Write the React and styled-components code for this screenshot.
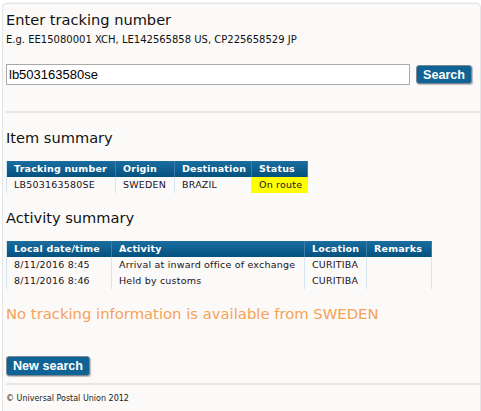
import React from "react";
import styled, { createGlobalStyle } from "styled-components";

const GlobalStyle = createGlobalStyle`
  body {
    margin: 0;
    background: #ffffff;
    font-family: "DejaVu Sans", Verdana, sans-serif;
    color: #000;
  }
`;

const items = [
  { tracking: "LB503163580SE", origin: "SWEDEN", destination: "BRAZIL", status: "On route" },
];

const events = [
  { date: "8/11/2016 8:45", activity: "Arrival at inward office of exchange", location: "CURITIBA", remarks: "" },
  { date: "8/11/2016 8:46", activity: "Held by customs", location: "CURITIBA", remarks: "" },
];

const App = () => {
  return (
    <>
      <GlobalStyle />
      <Panel>
        <Heading top={7}>Enter tracking number</Heading>
        <Hint>E.g. EE15080001 XCH, LE142565858 US, CP225658529 JP</Hint>
        <SearchRow>
          <TrackInput defaultValue="lb503163580se" />
          <Button>Search</Button>
        </SearchRow>
        <Divider top={26} />

        <Heading top={16}>Item summary</Heading>
        <Table>
          <thead>
            <tr>
              <Th w={109}>Tracking number</Th>
              <Th w={59}>Origin</Th>
              <Th w={77}>Destination</Th>
              <Th w={56}>Status</Th>
            </tr>
          </thead>
          <tbody>
            {items.map((it) => (
              <tr key={it.tracking}>
                <Td>{it.tracking}</Td>
                <Td>{it.origin}</Td>
                <Td>{it.destination}</Td>
                <Td highlight>{it.status}</Td>
              </tr>
            ))}
          </tbody>
        </Table>

        <Heading top={16}>Activity summary</Heading>
        <Table>
          <thead>
            <tr>
              <Th w={105}>Local date/time</Th>
              <Th w={193}>Activity</Th>
              <Th w={62}>Location</Th>
              <Th w={65}>Remarks</Th>
            </tr>
          </thead>
          <tbody>
            {events.map((ev) => (
              <tr key={ev.date}>
                <Td>{ev.date}</Td>
                <Td>{ev.activity}</Td>
                <Td>{ev.location}</Td>
                <Td>{ev.remarks}</Td>
              </tr>
            ))}
          </tbody>
        </Table>

        <Notice>No tracking information is available from SWEDEN</Notice>

        <NewSearch>New search</NewSearch>
        <Divider top={7} />
        <Footer>© Universal Postal Union 2012</Footer>
      </Panel>
    </>
  );
};

export default App;

const Panel = styled.div`
  margin: 3px 0 0 2px;
  width: 474px;
  min-height: 420px;
  padding: 0 0 0 3px;
  background: #fbfaf8;
  border: 1px solid #e4e4e4;
  border-bottom: none;
  border-radius: 5px 5px 0 0;
  box-shadow: 0 -1px 1px rgba(0, 0, 0, 0.04);
`;

const Heading = styled.h2`
  margin: ${(p) => p.top}px 0 0 0;
  font-size: 14.6px;
  line-height: 18px;
  font-weight: normal;
  color: #111;
`;

const Hint = styled.div`
  margin-top: 5px;
  font-size: 10px;
  line-height: 12px;
  color: #111;
`;

const SearchRow = styled.div`
  display: flex;
  align-items: center;
  gap: 6px;
  margin-top: 18px;
`;

const TrackInput = styled.input`
  box-sizing: border-box;
  width: 404px;
  height: 21px;
  margin: 0;
  padding: 0 2px;
  border: 1px solid #a9a9a9;
  background: #fff;
  font-family: "Liberation Sans", Arial, sans-serif;
  font-size: 13px;
  color: #000;
  outline: none;
`;

const Button = styled.button`
  box-sizing: border-box;
  height: 19px;
  padding: 0 6px;
  border: 1px solid #7d8890;
  border-radius: 3px;
  background: #0f6495;
  box-shadow: 1px 1px 1px rgba(0, 0, 0, 0.25);
  color: #fff;
  font-family: "Liberation Sans", Arial, sans-serif;
  font-weight: bold;
  font-size: 12.6px;
  line-height: 16px;
  cursor: pointer;
`;

const NewSearch = styled(Button)`
  display: block;
  height: 20px;
  margin-top: 33px;
  padding: 0 6px;
`;

const Divider = styled.hr`
  margin: ${(p) => p.top}px 0 0 0;
  height: 2px;
  border: none;
  background: #e6e6e6;
`;

const Table = styled.table`
  margin-top: 14px;
  border-collapse: collapse;
  table-layout: fixed;
  font-size: 9.5px;
  line-height: 12px;
  letter-spacing: 0.2px;
  border-left: 1px solid #d4e5ef;
`;

const Th = styled.th`
  box-sizing: border-box;
  width: ${(p) => p.w}px;
  padding: 2px 0 2px 7px;
  text-align: left;
  white-space: nowrap;
  color: #fff;
  font-weight: bold;
  background: linear-gradient(#1a6d9e, #03517f);
  border-right: 1px solid #3a7ea9;
`;

const Td = styled.td`
  padding: 2px 0 2px 7px;
  white-space: nowrap;
  color: #221122;
  background: ${(p) => (p.highlight ? "#ffff00" : "transparent")};
  border-right: 1px solid #d4e5ef;
`;

const Notice = styled.div`
  margin-top: 16px;
  font-size: 14.8px;
  line-height: 18px;
  color: #f7a155;
`;

const Footer = styled.div`
  margin-top: 9px;
  font-size: 8px;
  line-height: 10px;
  color: #222;
`;
